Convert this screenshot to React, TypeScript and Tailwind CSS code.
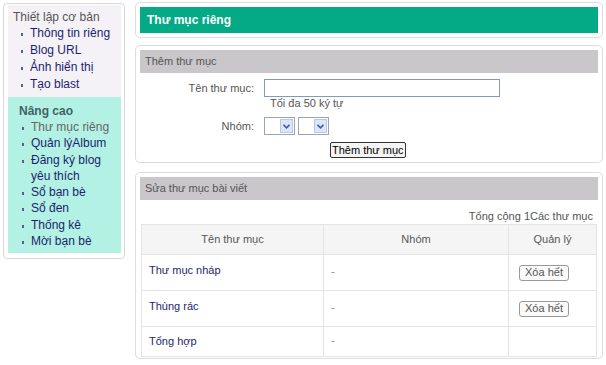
import React from "react";

const font = { fontFamily: "'Liberation Sans', Arial, sans-serif" };

function Chevron() {
  return (
    <span className="flex h-[14px] w-[13px] items-center justify-center border border-[#b8c8e8] bg-[#dde6f7]">
      <svg width="7" height="5" viewBox="0 0 7 5">
        <path d="M0.5 0.8 L3.5 3.8 L6.5 0.8" fill="none" stroke="#3a5fb0" strokeWidth="1.6" />
      </svg>
    </span>
  );
}

function Select() {
  return (
    <div className="flex h-[18px] w-[31px] items-center justify-end border border-[#9aa4b4] bg-white pr-[1px]">
      <Chevron />
    </div>
  );
}

function Bullet() {
  return <span className="mt-[8px] mr-[7px] h-[3px] w-[2px] shrink-0 bg-[#5a5f8a]" />;
}

export default function App() {
  const basic = ["Thông tin riêng", "Blog URL", "Ảnh hiển thị", "Tạo blast"];
  const adv = ["Thư mục riêng", "Quản lýAlbum", "Đăng ký blog yêu thích", "Sổ bạn bè", "Sổ đen", "Thống kê", "Mời bạn bè"];
  const rows = [
    { name: "Thư mục nháp", btn: true, h: "h-[36px]", pb: "pb-[4px]" },
    { name: "Thùng rác", btn: true, h: "h-[36px]", pb: "pb-[4px]" },
    { name: "Tổng hợp", btn: false, h: "h-[30px]", pb: "pb-0" },
  ];
  return (
    <div className="flex h-[365px] w-[606px] items-start overflow-hidden bg-white text-[11px]" style={font}>
      {/* Sidebar */}
      <div className="ml-[3px] mt-[3px] w-[122px] rounded-[4px] border border-[#d8d8d8] pl-[4px] pr-[3px] pt-[1px] pb-[5px]">
        <div className="bg-[#f5f2f7] pl-[5px] pt-[5px] pb-[4px] text-[12px]">
          <div className="leading-[15px] text-[#555555]">Thiết lập cơ bản</div>
          <ul className="pl-[8px]">
            {basic.map((b) => (
              <li key={b} className="flex leading-[17px] text-[#1b1f6e]">
                <Bullet />
                <span>{b}</span>
              </li>
            ))}
          </ul>
        </div>
        <div className="bg-[#b3f1e4] pl-[11px] pt-[6px] pb-[4px] text-[12px]">
          <div className="font-bold leading-[16px] text-[#3f6464]">Nâng cao</div>
          <ul className="pl-[3px]">
            {adv.map((b, i) => (
              <li key={b} className={"flex leading-[16.3px] " + (i === 0 ? "text-[#666666]" : "text-[#1b1f6e]")}>
                <Bullet />
                <span className="w-[84px]">{b}</span>
              </li>
            ))}
          </ul>
        </div>
      </div>

      {/* Main */}
      <div className="ml-[10px] flex w-[468px] flex-col">
        <div className="mt-[2px] rounded-[5px] border border-[#dcdcdc] p-[4px]">
          <div className="flex h-[26px] items-center bg-[#04a986] pl-[7px] text-[12px] font-bold text-white">Thư mục riêng</div>
        </div>

        <div className="mt-[7px] rounded-[5px] border border-[#dcdcdc] p-[4px]">
          <div className="flex h-[23px] items-center bg-[#c9c7c9] pl-[5px] text-[11px] text-[#555555]">Thêm thư mục</div>
          <div className="mt-[6px] flex items-center">
            <div className="w-[114px] text-right text-[#555555]">Tên thư mục:</div>
            <div className="ml-[10px] h-[18px] w-[236px] border border-[#7f9db9] bg-white" />
          </div>
          <div className="ml-[130px] leading-[13px] text-[#555555]">Tối đa 50 ký tự</div>
          <div className="mt-[7px] flex items-center">
            <div className="w-[114px] text-right text-[#555555]">Nhóm:</div>
            <div className="ml-[10px] flex gap-[3px]">
              <Select />
              <Select />
            </div>
          </div>
          <div className="mt-[7px] flex">
            <button className="ml-[190px] h-[16px] rounded-[2px] border border-[#333333] bg-[#f4f4f4] px-[1px] text-[11px] leading-[13px] text-black">Thêm thư mục</button>
          </div>
        </div>

        <div className="mt-[9px] rounded-[5px] border border-[#dcdcdc] p-[4px] pb-[1px]">
          <div className="flex h-[23px] items-center bg-[#c9c7c9] pl-[5px] text-[11px] text-[#555555]">Sửa thư mục bài viết</div>
          <div className="mt-[10px] pr-[5px] text-right leading-[13px] text-[#555555]">Tổng cộng 1Các thư mục</div>
          <table className="ml-[1px] mt-[1px] w-[456px] border-collapse text-[11px]">
            <thead>
              <tr className="h-[30px] bg-[#f6f5f6]">
                <th className="w-[182px] border border-[#e4e4e4] font-normal text-[#555555]">Tên thư mục</th>
                <th className="w-[185px] border border-[#e4e4e4] font-normal text-[#555555]">Nhóm</th>
                <th className="border border-[#e4e4e4] font-normal text-[#555555]">Quản lý</th>
              </tr>
            </thead>
            <tbody>
              {rows.map((r) => (
                <tr key={r.name} className={r.h}>
                  <td className={"border border-[#e4e4e4] pl-[7px] text-[#1b1f6e] " + r.pb}>{r.name}</td>
                  <td className="border border-[#e4e4e4] pl-[7px] pb-[2px] text-[#888888]">-</td>
                  <td className="border border-[#e4e4e4] pl-[10px] text-left">
                    {r.btn && (
                      <button className="h-[16px] w-[50px] rounded-[3px] border border-[#999999] bg-[#fafafa] text-[11px] leading-[13px] text-[#555555]">Xóa hết</button>
                    )}
                  </td>
                </tr>
              ))}
            </tbody>
          </table>
        </div>
      </div>
    </div>
  );
}
